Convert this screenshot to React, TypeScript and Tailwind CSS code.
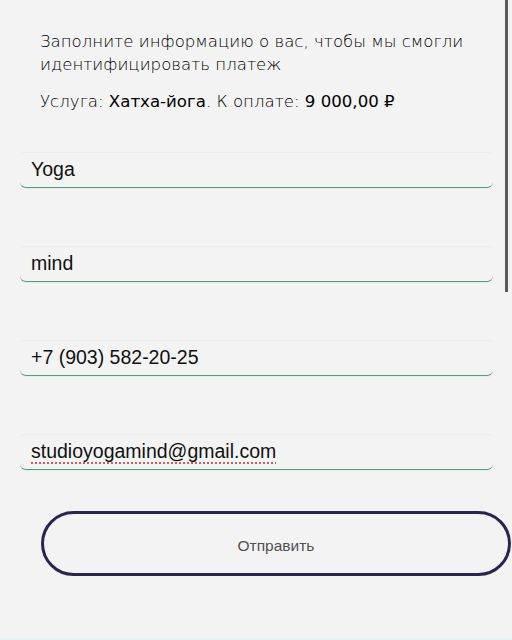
import React from "react";

const FIELDS = [
  { value: "Yoga", type: "text" },
  { value: "mind", type: "text" },
  { value: "+7 (903) 582-20-25", type: "tel" },
  { value: "studioyogamind@gmail.com", type: "email" },
];

function Field({ value, type }: { value: string; type: string }) {
  const isEmail = type === "email";
  return (
    <div className="ml-[20px] w-[473px] h-[35px] flex items-center px-[11px] rounded-b-[6px] rounded-t-[4px] border-b border-solid border-[#5a9c7a] shadow-[0_-1px_0_#ececec,0_1px_0_#dcefe6] bg-[#f3f3f3]">
      <span
        className={
          "text-[19.5px] leading-none text-[#111] font-['Liberation_Sans',Arial,sans-serif]" +
          (isEmail ? " underline decoration-dotted decoration-[#d05a5a] underline-offset-[4px]" : "")
        }
      >
        {value}
      </span>
    </div>
  );
}

export default function App() {
  return (
    <div className="relative w-[512px] h-[640px] overflow-hidden bg-[#f3f3f3] flex flex-col">
      {/* Intro text */}
      <div className="pt-[30px] px-[40px] font-['DejaVu_Sans','Noto_Sans',sans-serif] text-[16.6px] leading-[23px] text-black font-light">
        <p>Заполните информацию о вас, чтобы мы смогли идентифицировать платеж</p>
        <p className="mt-[14px]">
          Услуга: <span className="font-normal">Хатха-йога</span>. К оплате:{" "}
          <span className="font-normal">9 000,00 ₽</span>
        </p>
      </div>

      {/* Form fields */}
      <div className="mt-[40px] flex flex-col gap-[59px]">
        {FIELDS.map((f) => (
          <Field key={f.value} value={f.value} type={f.type} />
        ))}
      </div>

      {/* Submit */}
      <button className="mt-[41px] ml-[41px] w-[470px] h-[65px] rounded-full border-[3px] border-[#2b2452] flex items-center justify-center pt-[4px] text-[15.5px] text-[#505050] font-['Liberation_Sans',Arial,sans-serif]">
        Отправить
      </button>

      <div className="mt-auto h-[2px] bg-[#e3f2f2]" />

      {/* Scrollbar */}
      <div className="absolute top-0 left-[505px] w-[3px] h-[292px] bg-[#5a5a5a]" />
    </div>
  );
}
